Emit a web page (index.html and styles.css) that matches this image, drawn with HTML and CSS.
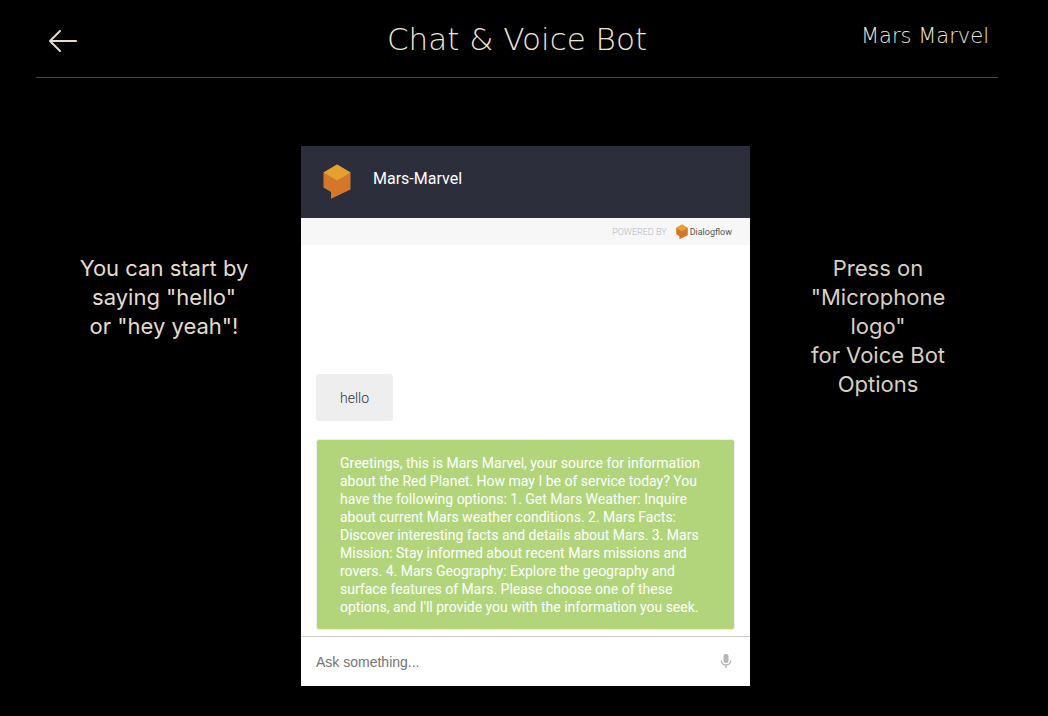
FILE: index.html
```html
<!DOCTYPE html>
<html lang="en">
<head>
<meta charset="utf-8">
<title>Chat &amp; Voice Bot</title>
<link rel="stylesheet" href="styles.css">
</head>
<body>
<header class="page-header">
  <a class="back" href="#" aria-label="Back">
    <svg width="30" height="24" viewBox="0 0 30 24" fill="none" stroke="currentColor" stroke-width="2" stroke-linecap="round" stroke-linejoin="round"><path d="M28 12H2M12 2L2 12l10 10"/></svg>
  </a>
  <h1 class="title">Chat &amp; Voice Bot</h1>
  <a class="brand" href="#">Mars Marvel</a>
</header>
<main class="layout">
  <p class="hint">You can start by<br>saying "hello"<br>or "hey yeah"!</p>
  <section class="chat">
    <header class="agent">
      <svg class="agent-logo" width="28" height="36" viewBox="0 0 28 36"><path fill="#d4772b" d="M.5 8.500 14 .5l13.500 8v17L8 34.800V28L.5 23.500z"/><path fill="#e5a033" d="M.5 8.500 14 .5l13.500 8L14 16.500z"/></svg>
      <h2 class="agent-name">Mars-Marvel</h2>
    </header>
    <div class="powered">
      <span class="powered-label">POWERED BY</span>
      <a class="vendor" href="#"><svg width="12" height="16" viewBox="0 0 28 36"><path fill="#d4772b" d="M.5 8.500 14 .5l13.500 8v17L8 34.800V28L.5 23.500z"/><path fill="#e5a033" d="M.5 8.500 14 .5l13.500 8L14 16.500z"/></svg>Dialogflow</a>
    </div>
    <div class="messages">
      <p class="message user">hello</p>
      <p class="message bot">Greetings, this is Mars Marvel, your source for information about the Red Planet. How may I be of service today? You have the following options: 1. Get Mars Weather: Inquire about current Mars weather conditions. 2. Mars Facts: Discover interesting facts and details about Mars. 3. Mars Mission: Stay informed about recent Mars missions and rovers. 4. Mars Geography: Explore the geography and surface features of Mars. Please choose one of these options, and I'll provide you with the information you seek.</p>
    </div>
    <form class="ask">
      <input class="ask-input" type="text" placeholder="Ask something..." aria-label="Ask something">
      <button class="mic" type="button" aria-label="Speak">
        <svg width="12" height="16" viewBox="0 0 12 16"><rect x="3.500" y="0" width="5" height="9" rx="2.200" fill="#b4b6be"/><path d="M1.200 6.500a4.800 4.400 0 0 0 9.600 0M6 11v3" fill="none" stroke="#b4b6be" stroke-width="1.400"/></svg>
      </button>
    </form>
  </section>
  <p class="hint hint-voice">Press on<br>"Microphone<br>logo"<br>for Voice Bot<br>Options</p>
</main>
</body>
</html>
```
FILE: styles.css
```css
* { box-sizing: border-box; }
body {
  margin: 0;
  background: #000;
  color: #e5dccb;
  font-family: Roboto, "Liberation Sans", sans-serif;
}
h1, h2, p { margin: 0; }
a { color: inherit; text-decoration: none; }
svg { display: block; }

.page-header {
  display: grid;
  grid-template-columns: 1fr auto 1fr;
  align-items: start;
  height: 78px;
  margin: 0 50px 0 36px;
  padding: 22px 9px 0 9px;
  border-bottom: 1px solid #4a4a4a;
}
.back { justify-self: start; padding: 7px 0 0 3px; }
.title, .brand { font-family: "DejaVu Sans", sans-serif; font-weight: 200; color: #f0e6d6; }
.title { font-size: 31px; line-height: 35px; }
.brand { justify-self: end; font-size: 21px; line-height: 28px; }

.layout {
  display: grid;
  grid-template-columns: 1fr 449px 1fr;
  align-items: start;
  padding: 68px 24px 30px 27px;
}
.hint {
  padding-top: 108px;
  font-family: Inter, "Open Sans", sans-serif;
  font-size: 22px;
  line-height: 29px;
  text-align: center;
}
.hint-voice { padding-right: 18px; color: #d8d0c0; }

.chat { background: #fff; }
.agent {
  display: flex;
  align-items: center;
  height: 72px;
  padding: 0 22px;
  gap: 22px;
  background: #2d2e3c;
  color: #fff;
}
.agent-name { padding-bottom: 6px; font-size: 16px; line-height: 20px; font-weight: 400; }
.powered {
  display: flex;
  align-items: center;
  justify-content: flex-end;
  gap: 9px;
  height: 27px;
  padding-right: 18px;
  background: #f7f7f7;
  font-size: 9px;
}
.powered-label { color: #b4b6c4; font-weight: 300; }
.vendor { display: flex; align-items: center; gap: 2px; color: #555; }
.messages {
  display: flex;
  flex-direction: column;
  justify-content: flex-end;
  align-items: flex-start;
  gap: 18px;
  height: 391px;
  padding: 0 15px 6px;
}
.message {
  padding: 14px 23px 13px;
  border: 1px solid #eee;
  border-radius: 3px;
  font-size: 14px;
  line-height: 18px;
}
.user { background: #eee; color: #2d2e3c; font-weight: 300; }
.bot { background: #b2d57c; color: #fff; }
.ask {
  display: flex;
  align-items: center;
  height: 50px;
  padding: 0 18px 0 15px;
  border-top: 1px solid #ccc;
}
.ask-input {
  flex: 1;
  padding: 0;
  border: 0;
  outline: 0;
  background: none;
  color: #2d2e3c;
  font: 14px/18px "Liberation Sans", sans-serif;
}
.ask-input::placeholder { color: #757575; }
.mic { padding: 0; border: 0; background: none; }
```
